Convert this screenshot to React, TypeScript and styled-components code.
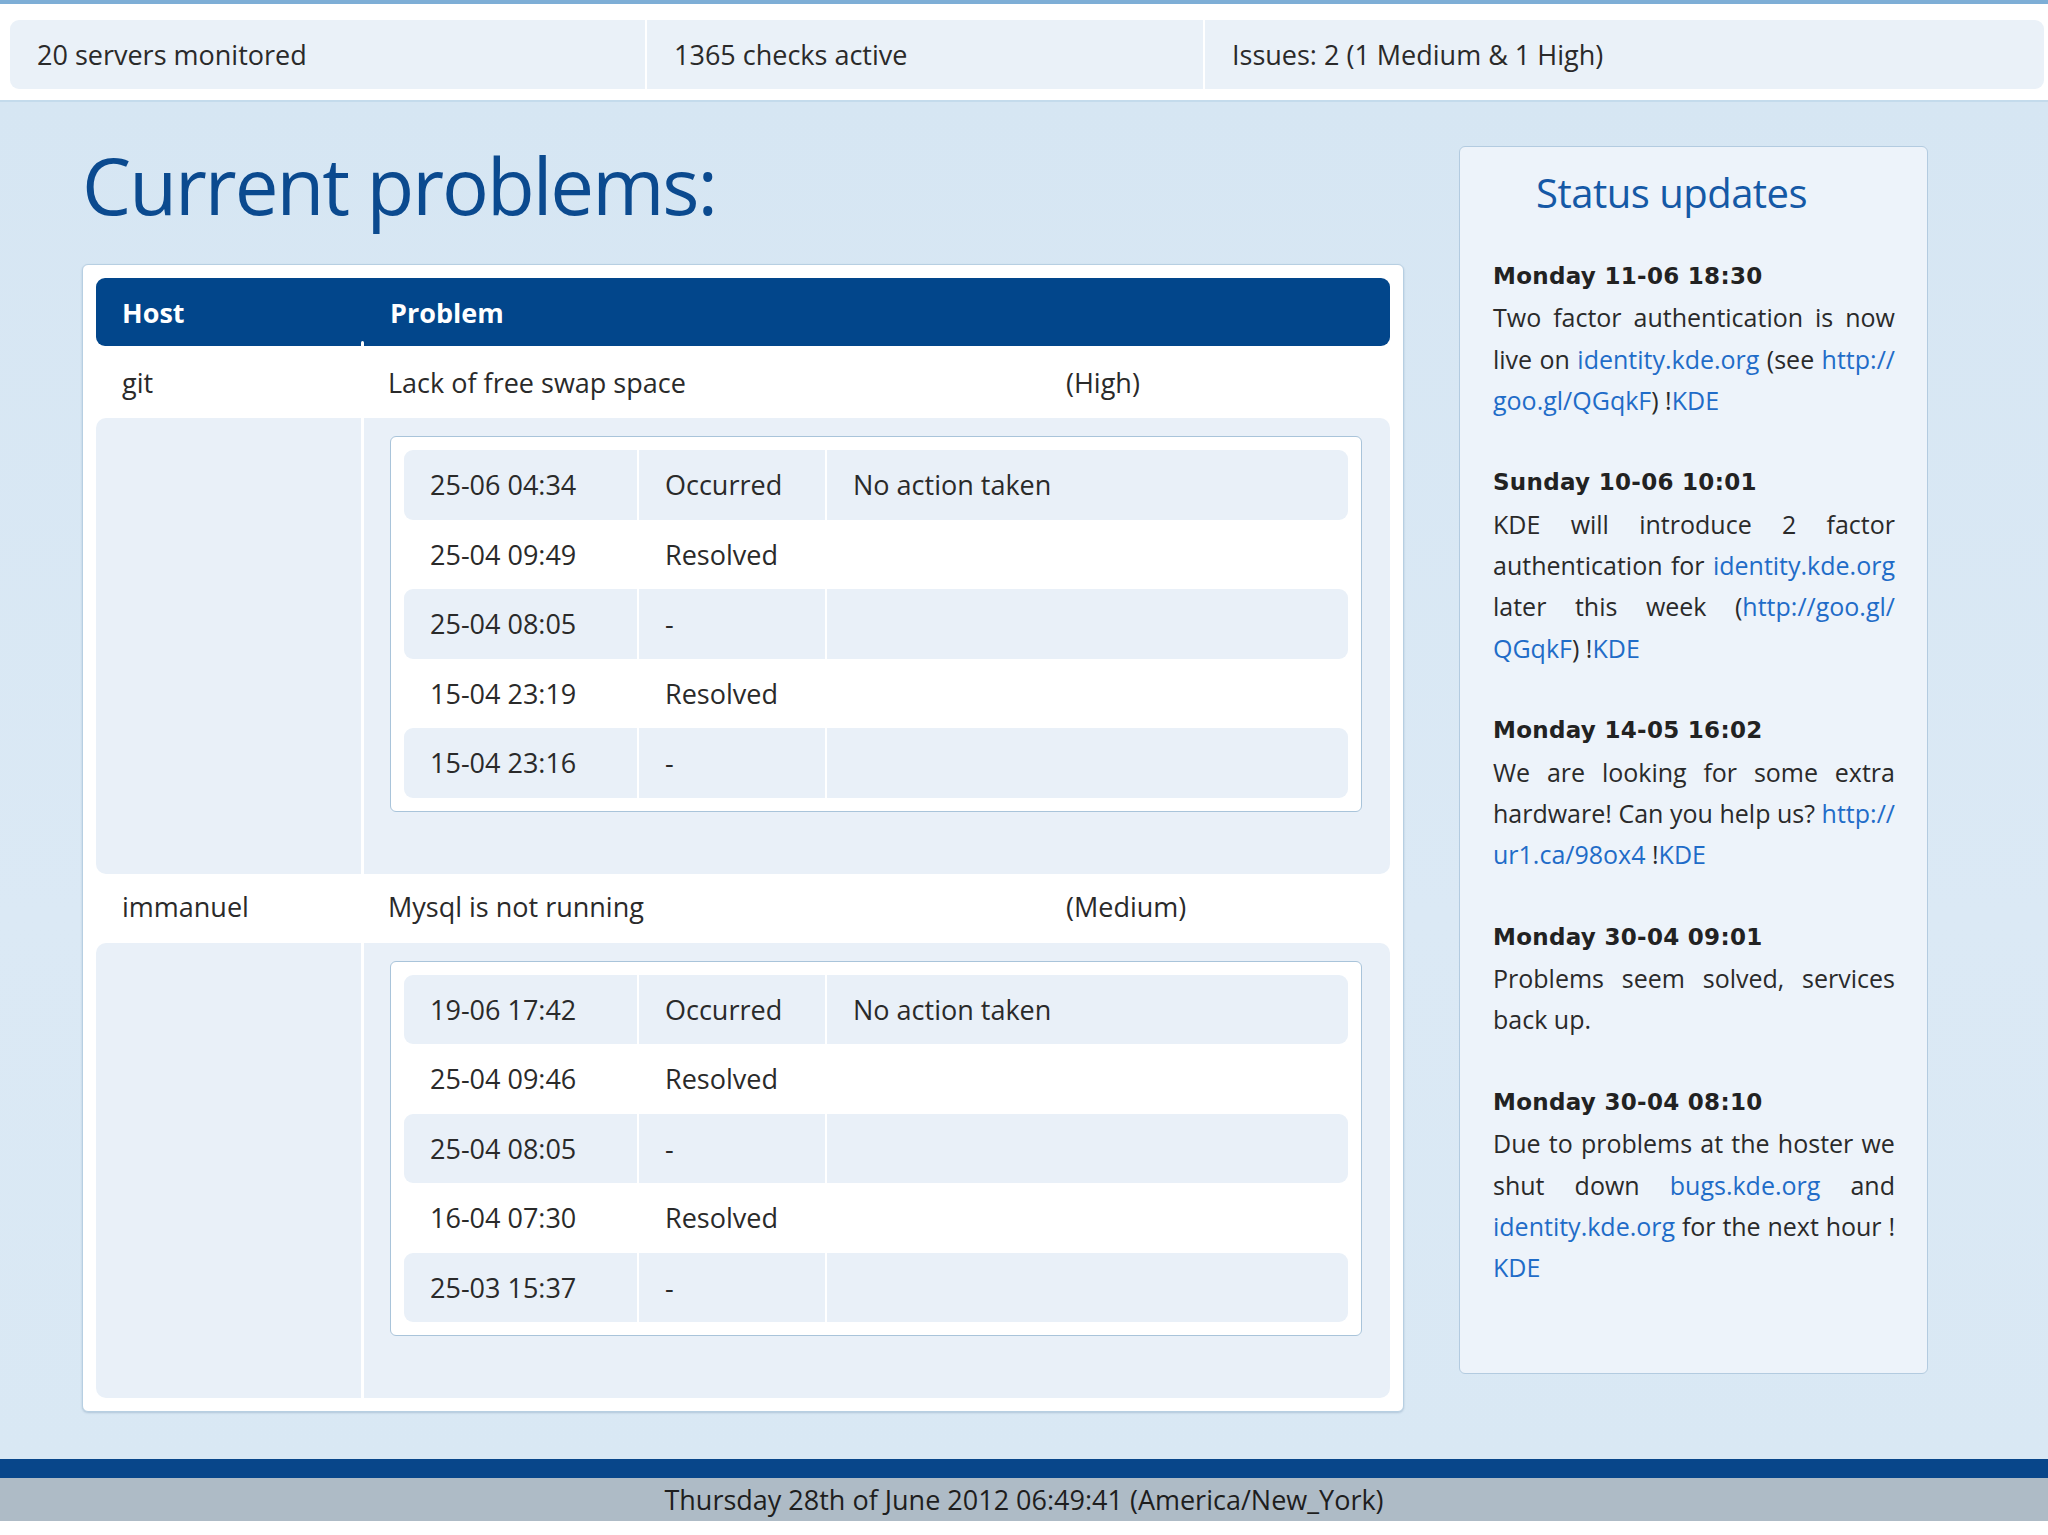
import styled, { createGlobalStyle } from 'styled-components'

const GlobalStyle = createGlobalStyle`
  html, body {
    margin: 0;
    padding: 0;
    background: #ffffff;
  }
  body {
    font-family: 'Open Sans', 'Noto Sans', 'Liberation Sans', sans-serif;
    color: #222;
  }
`

const COLS = '265px 675px 1fr'

const problems = [
  {
    host: 'git',
    problem: 'Lack of free swap space',
    severity: '(High)',
    events: [
      {date: '25-06 04:34', status: 'Occurred', action: 'No action taken'},
      {date: '25-04 09:49', status: 'Resolved', action: ''},
      {date: '25-04 08:05', status: '-', action: ''},
      {date: '15-04 23:19', status: 'Resolved', action: ''},
      {date: '15-04 23:16', status: '-', action: ''},
    ],
  },
  {
    host: 'immanuel',
    problem: 'Mysql is not running',
    severity: '(Medium)',
    events: [
      {date: '19-06 17:42', status: 'Occurred', action: 'No action taken'},
      {date: '25-04 09:46', status: 'Resolved', action: ''},
      {date: '25-04 08:05', status: '-', action: ''},
      {date: '16-04 07:30', status: 'Resolved', action: ''},
      {date: '25-03 15:37', status: '-', action: ''},
    ],
  },
]

// lines are given as they wrap in the panel, [..] marks a link
const updates = [
  {
    when: 'Monday 11-06 18:30',
    lines: ['Two factor authentication is now', 'live on [identity.kde.org] (see [http://]', '[goo.gl/QGqkF]) ![KDE]'],
  },
  {
    when: 'Sunday 10-06 10:01',
    lines: [
      'KDE will introduce 2 factor',
      'authentication for [identity.kde.org]',
      'later this week ([http://goo.gl/]',
      '[QGqkF]) ![KDE]',
    ],
  },
  {
    when: 'Monday 14-05 16:02',
    lines: ['We are looking for some extra', 'hardware! Can you help us? [http://]', '[ur1.ca/98ox4] ![KDE]'],
  },
  {
    when: 'Monday 30-04 09:01',
    lines: ['Problems seem solved, services', 'back up.'],
  },
  {
    when: 'Monday 30-04 08:10',
    lines: [
      'Due to problems at the hoster we',
      'shut down [bugs.kde.org] and',
      '[identity.kde.org] for the next hour !',
      '[KDE]',
    ],
  },
]

const renderWord = (word: string) =>
  word
    .split(/(\[[^\]]+\])/)
    .filter(Boolean)
    .map((part, j) => (part.startsWith('[') ? <UpdateLink key={j}>{part.slice(1, -1)}</UpdateLink> : part))

const App = () => {
  return (
    <Page>
      <GlobalStyle />
      <TopStrip>
        <Stats>
          <StatCell>20 servers monitored</StatCell>
          <StatCell>1365 checks active</StatCell>
          <StatCell>Issues: 2 (1 Medium &amp; 1 High)</StatCell>
        </Stats>
      </TopStrip>

      <Main>
        <LeftColumn>
          <Title>Current problems:</Title>
          <Card>
            <HeaderRow>
              <HeaderCell>Host</HeaderCell>
              <HeaderCell $wide>Problem</HeaderCell>
            </HeaderRow>
            {problems.map(p => (
              <ProblemGroup key={p.host}>
                <SummaryRow>
                  <SummaryCell>{p.host}</SummaryCell>
                  <SummaryCell>{p.problem}</SummaryCell>
                  <SummaryCell>{p.severity}</SummaryCell>
                </SummaryRow>
                <DetailRow>
                  <DetailHost />
                  <DetailBody>
                    <EventBox>
                      {p.events.map((ev, i) => (
                        <EventRow key={i} $shade={i % 2 === 0}>
                          <EventCell>{ev.date}</EventCell>
                          <EventCell>{ev.status}</EventCell>
                          <EventCell>{ev.action}</EventCell>
                        </EventRow>
                      ))}
                    </EventBox>
                  </DetailBody>
                </DetailRow>
              </ProblemGroup>
            ))}
          </Card>
        </LeftColumn>

        <StatusPanel>
          <PanelTitle>Status updates</PanelTitle>
          {updates.map(u => (
            <Update key={u.when}>
              <UpdateHead>{u.when}</UpdateHead>
              {u.lines.map((line, i) =>
                i === u.lines.length - 1 ? (
                  <LastLine key={i}>
                    {line.split(' ').map((w, k) => (
                      <span key={k}>
                        {k > 0 ? ' ' : ''}
                        {renderWord(w)}
                      </span>
                    ))}
                  </LastLine>
                ) : (
                  <JustifiedLine key={i}>
                    {line.split(' ').map((w, k) => (
                      <span key={k}>{renderWord(w)}</span>
                    ))}
                  </JustifiedLine>
                ),
              )}
            </Update>
          ))}
        </StatusPanel>
      </Main>

      <Footer>
        <FooterText>Thursday 28th of June 2012 06:49:41 (America/New_York)</FooterText>
      </Footer>
    </Page>
  )
}

export default App

const Page = styled.div`
  width: 2048px;
  min-height: 1535px;
  background: #ffffff;
`

const TopStrip = styled.header`
  background: #ffffff;
  border-top: 4px solid #7eaed6;
  border-bottom: 2px solid #c4dbec;
  padding: 16px 4px 11px 10px;
`

const Stats = styled.div`
  display: grid;
  grid-template-columns: 635px 556px 1fr;
  gap: 2px;
`

const StatCell = styled.div`
  height: 69px;
  display: flex;
  align-items: center;
  padding-left: 27px;
  background: #eaf1f8;
  font-size: 27px;
  color: #2a2a2a;

  &:first-child {
    border-radius: 9px 0 0 9px;
  }
  &:last-child {
    border-radius: 0 9px 9px 0;
  }
`

const Main = styled.main`
  display: flex;
  align-items: flex-start;
  gap: 55px;
  padding: 0 0 47px 82px;
  background: linear-gradient(180deg, #d6e6f3 0%, #dbe9f5 60%, #d9e8f4 100%);
`

const LeftColumn = styled.section`
  width: 1322px;
`

const Title = styled.h1`
  margin: 36px 0 32px;
  font-size: 78px;
  line-height: 94px;
  font-weight: 400;
  letter-spacing: -2px;
  color: #0b4a8f;
`

const Card = styled.div`
  background: #ffffff;
  border: 1px solid #b7cfe2;
  border-radius: 6px;
  padding: 13px;
  box-shadow: 0 1px 2px rgba(60, 100, 140, 0.25);
`

const HeaderRow = styled.div`
  position: relative;
  display: grid;
  grid-template-columns: ${COLS};
  column-gap: 3px;
  height: 68px;
  margin-bottom: 3px;
  background: #02468b;
  border-radius: 9px;

  /* small notch where the two header cells meet */
  &::after {
    content: '';
    position: absolute;
    left: 265px;
    bottom: 0;
    width: 3px;
    height: 5px;
    background: #ffffff;
    border-radius: 2px 2px 0 0;
  }
`

const HeaderCell = styled.div<{$wide?: boolean}>`
  grid-column: ${p => (p.$wide ? 'span 2' : 'auto')};
  display: flex;
  align-items: center;
  padding-left: 26px;
  font-size: 27px;
  font-weight: 700;
  color: #ffffff;
`

const ProblemGroup = styled.div``

const SummaryRow = styled.div`
  display: grid;
  grid-template-columns: ${COLS};
  column-gap: 3px;
  height: 69px;
`

const SummaryCell = styled.div`
  display: flex;
  align-items: center;
  padding-left: 26px;
  padding-bottom: 3px;
  font-size: 27px;
  color: #2a2a2a;

  &:nth-child(2) {
    padding-left: 24px;
  }
  &:nth-child(3) {
    padding-left: 24px;
  }
`

const DetailRow = styled.div`
  display: grid;
  grid-template-columns: ${COLS};
  column-gap: 3px;
`

const DetailHost = styled.div`
  background: #e9f0f8;
  border-radius: 10px 0 0 10px;
`

const DetailBody = styled.div`
  grid-column: span 2;
  background: #e9f0f8;
  border-radius: 0 10px 10px 0;
  padding: 18px 28px 62px 26px;
`

const EventBox = styled.div`
  background: #ffffff;
  border: 1px solid #a9c4da;
  border-radius: 6px;
  padding: 13px;
`

const EventRow = styled.div<{$shade: boolean}>`
  display: grid;
  grid-template-columns: 233px 186px 1fr;
  column-gap: 2px;
  height: 69.5px;

  & > div {
    background: ${p => (p.$shade ? '#e9f0f8' : 'transparent')};
  }
`

const EventCell = styled.div`
  display: flex;
  align-items: center;
  padding-left: 26px;
  font-size: 27px;
  color: #2a2a2a;

  &:first-child {
    padding-left: 26px;
    border-radius: 9px 0 0 9px;
  }
  &:last-child {
    border-radius: 0 9px 9px 0;
  }
`

const StatusPanel = styled.aside`
  box-sizing: border-box;
  width: 469px;
  height: 1228px;
  margin-top: 44px;
  padding: 18px 32px 0 33px;
  background: #edf3fa;
  border: 1px solid #b3cbe0;
  border-radius: 6px;
`

const PanelTitle = styled.h2`
  margin: 0 0 35px;
  padding-left: 43px;
  font-size: 40px;
  line-height: 56px;
  font-weight: 400;
  letter-spacing: -0.5px;
  color: #1559a6;
`

const Update = styled.div`
  margin-bottom: 41.3px;
`

const UpdateHead = styled.div`
  font-family: 'DejaVu Sans', 'Liberation Sans', sans-serif;
  font-weight: 700;
  font-size: 23px;
  letter-spacing: 0.3px;
  line-height: 41.3px;
  color: #222;
`

const JustifiedLine = styled.div`
  display: flex;
  justify-content: space-between;
  white-space: nowrap;
  font-size: 25px;
  line-height: 41.3px;
  color: #2a2a2a;
`

const LastLine = styled.div`
  white-space: nowrap;
  font-size: 25px;
  line-height: 41.3px;
  color: #2a2a2a;
`

const UpdateLink = styled.span`
  color: #1f6cc8;
`

const Footer = styled.footer`
  border-top: 19px solid #08468a;
  background: #aebbc6;
  height: 43px;
  display: flex;
  align-items: center;
  justify-content: center;
`

const FooterText = styled.span`
  font-size: 27px;
  letter-spacing: 0;
  color: #1e1e1e;
`
